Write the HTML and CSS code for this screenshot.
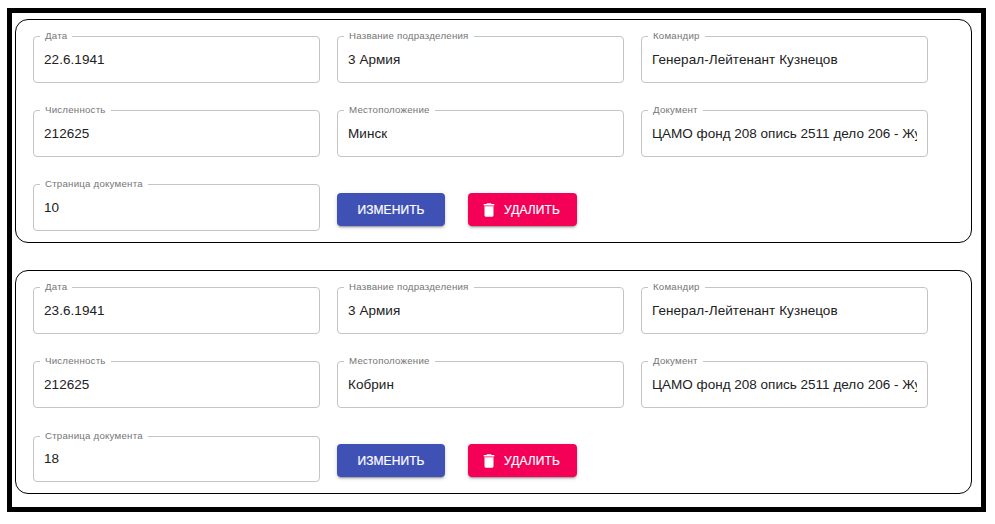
FILE: index.html
```html
<!DOCTYPE html>
<html lang="ru">
<head>
<meta charset="utf-8">
<title>Подразделения</title>
<link rel="stylesheet" href="styles.css">
</head>
<body>
<main class="frame">
  <section class="card">
    <div class="field"><span class="label">Дата</span><span class="value">22.6.1941</span></div>
    <div class="field"><span class="label">Название подразделения</span><span class="value">3 Армия</span></div>
    <div class="field"><span class="label">Командир</span><span class="value">Генерал-Лейтенант Кузнецов</span></div>
    <div class="field"><span class="label">Численность</span><span class="value">212625</span></div>
    <div class="field"><span class="label">Местоположение</span><span class="value">Минск</span></div>
    <div class="field"><span class="label">Документ</span><span class="value long">ЦАМО фонд 208 опись 2511 дело 206 - Жу</span></div>
    <div class="field"><span class="label">Страница документа</span><span class="value">10</span></div>
    <div class="actions">
      <button class="btn edit">ИЗМЕНИТЬ</button>
      <button class="btn delete"><svg class="icon" viewBox="0 0 24 24"><path d="M6 19c0 1.1.9 2 2 2h8c1.1 0 2-.9 2-2V7H6v12zM19 4h-3.500l-1-1h-5l-1 1H5v2h14V4z"/></svg>УДАЛИТЬ</button>
    </div>
  </section>
  <section class="card">
    <div class="field"><span class="label">Дата</span><span class="value">23.6.1941</span></div>
    <div class="field"><span class="label">Название подразделения</span><span class="value">3 Армия</span></div>
    <div class="field"><span class="label">Командир</span><span class="value">Генерал-Лейтенант Кузнецов</span></div>
    <div class="field"><span class="label">Численность</span><span class="value">212625</span></div>
    <div class="field"><span class="label">Местоположение</span><span class="value">Кобрин</span></div>
    <div class="field"><span class="label">Документ</span><span class="value long">ЦАМО фонд 208 опись 2511 дело 206 - Жу</span></div>
    <div class="field short"><span class="label">Страница документа</span><span class="value">18</span></div>
    <div class="actions">
      <button class="btn edit">ИЗМЕНИТЬ</button>
      <button class="btn delete"><svg class="icon" viewBox="0 0 24 24"><path d="M6 19c0 1.1.9 2 2 2h8c1.1 0 2-.9 2-2V7H6v12zM19 4h-3.500l-1-1h-5l-1 1H5v2h14V4z"/></svg>УДАЛИТЬ</button>
    </div>
  </section>
</main>
</body>
</html>
```
FILE: styles.css
```css
* { box-sizing: border-box; }

body {
  margin: 0;
  padding: 8px 9px 0 7px;
  background: #fff;
  font-family: "Liberation Sans", Arial, sans-serif;
}

.frame {
  width: 979px;
  height: 504px;
  border: 5px solid #000;
  padding: 6px 3px 0;
  display: flex;
  flex-direction: column;
  gap: 27px;
}

.card {
  width: 957px;
  height: 224px;
  border: 1px solid #000;
  border-radius: 13px;
  padding: 16px 17px 0;
  display: grid;
  grid-template-columns: repeat(3, 287px);
  grid-template-rows: repeat(3, 47px);
  gap: 27px 17px;
}

.field {
  position: relative;
  border: 1px solid #c4c4c4;
  border-radius: 4px;
  padding: 0 10px;
}

.field.short {
  height: 46px;
  margin-top: 1px;
}

.field.short .value { line-height: 43px; }

.label {
  position: absolute;
  left: 6px;
  top: -7px;
  padding: 0 5px;
  background: #fff;
  color: #757575;
  font-size: 9.7px;
  line-height: 12px;
  letter-spacing: 0.22px;
  white-space: nowrap;
}

.value {
  display: block;
  overflow: hidden;
  white-space: nowrap;
  color: #212121;
  font-size: 13.5px;
  line-height: 45px;
  letter-spacing: 0.06px;
}

.value.long { letter-spacing: 0.01px; }

.actions {
  display: flex;
  gap: 23px;
  padding-top: 9px;
  grid-column: span 2;
}

.btn {
  height: 33px;
  border: 0;
  border-radius: 4px;
  padding: 0;
  color: #fff;
  font-family: inherit;
  font-size: 12px;
  letter-spacing: 0.1px;
  -webkit-text-stroke: 0.2px #fff;
  display: flex;
  align-items: center;
  justify-content: center;
  box-shadow: 0 3px 1px -2px rgba(0,0,0,.2), 0 2px 2px 0 rgba(0,0,0,.14), 0 1px 5px 0 rgba(0,0,0,.12);
}

.edit { width: 108px; background: #3f51b5; }
.delete { width: 109px; padding-left: 12px; justify-content: flex-start; background: #f50057; }

.icon {
  width: 18px;
  height: 18px;
  margin-right: 6px;
  fill: #fff;
}
```
